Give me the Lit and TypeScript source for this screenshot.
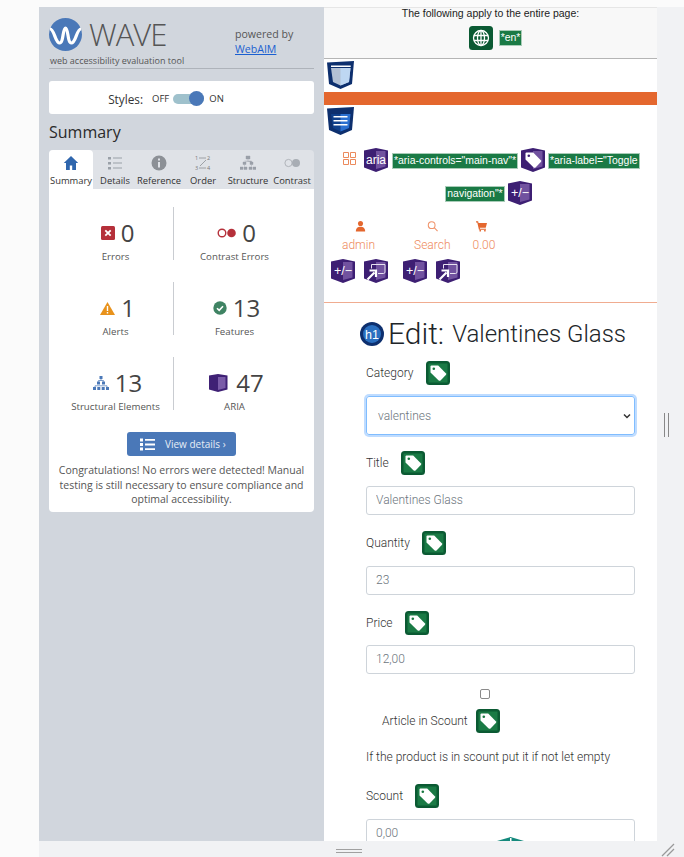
import { LitElement, css, html, svg } from "lit";
import { customElement } from "lit/decorators.js";

const tagGlyph = svg`<path d="M5.500 4.500h6.700l7.600 7.800a1.300 1.300 0 0 1 0 1.800l-5.300 5.300a1.300 1.300 0 0 1-1.800 0L4.500 11.500v-6a1 1 0 0 1 1-1z" fill="#fff" />`;

const greenTag = () => html`<svg class="icon" viewBox="0 0 24 24">
  <rect width="24" height="24" rx="3.500" fill="#0b5a33" />
  <rect x="2.500" y="2.500" width="19" height="19" fill="#1a7a45" />
  ${tagGlyph}
  <circle cx="7.800" cy="7.800" r="1.300" fill="#17773f" />
</svg>`;

const purple = (inner: unknown) => html`<svg class="icon" viewBox="0 0 24 24">
  <path d="M0 2.500 12 0l12 2.500v17L12 24 0 19.500z" fill="#3d1f73" />
  <path d="M12 3h9.500v15.500L12 21z" fill="#71529f" />
  ${inner}
</svg>`;

const plusMinus = () =>
  purple(svg`<text x="12" y="16" font-family="Liberation Sans, sans-serif" font-size="12.500" fill="#fff" text-anchor="middle">+/−</text>`);

const popup = () =>
  purple(svg`<path d="M7.500 9.500v-4h13.500v7.500a1.500 1.500 0 0 1-1.500 1.500H14" fill="none" stroke="#e8e2f0" />
    <path d="M3.500 20.500 10.500 13.500M5.500 11.500h6.500v6.500" fill="none" stroke="#fff" stroke-width="2.200" />`);

const shield = (fill: string, side: string, inner: unknown) => html`<svg class="shield" viewBox="0 0 27 28">
  <path d="M0 1.500 27 0l-2 23-11.500 5L2 23z" fill="#0d2f6e" />
  <path d="M4 7h19.500L22 21l-8.500 3.500L6 21z" fill="${fill}" />
  <path d="M13.500 7h10L22 21l-8.500 3.500z" fill="${side}" />
  ${inner}
</svg>`;

const field = (label: string, value: string, tight = false) => html`
  <div class="label-row ${tight ? "tight" : ""}"><span>${label}</span>${greenTag()}</div>
  <input class="input" .value=${value} />
`;

@customElement("app-root")
export class AppRoot extends LitElement {
  static styles = css`
    :host {
      display: block;
      width: 684px;
      height: 857px;
      overflow: hidden;
      background: #fbfbfb;
    }

    .frame {
      display: flex;
      flex-direction: column;
      height: 850px;
      padding-top: 7px;
    }

    .main {
      display: flex;
      height: 834px;
      margin-left: 39px;
    }

    .sidebar {
      flex: none;
      box-sizing: border-box;
      width: 285px;
      padding: 11px 10px 0;
      background: #d1d6dd;
      color: #444;
      font-family: "Open Sans", sans-serif;
    }

    .brand {
      display: flex;
      height: 50px;
      border-bottom: 1px solid #aeb3ba;
    }

    .logo-block {
      width: 186px;
    }

    .logo {
      display: flex;
      align-items: center;
      gap: 7px;
      height: 33px;
    }

    .logo svg {
      width: 33px;
      height: 33px;
    }

    .wave {
      color: #555;
      font-size: 31px;
      font-weight: 300;
      line-height: 33px;
      letter-spacing: -1px;
    }

    .tagline {
      margin: 3px 0 0 1px;
      color: #555;
      font-size: 9px;
      line-height: 13px;
      white-space: nowrap;
    }

    .powered {
      padding-top: 9px;
      color: #555;
      font-size: 10.6px;
      line-height: 14.5px;
    }

    .powered a {
      display: block;
      color: #1a5fd0;
      text-decoration: underline;
    }

    .styles-card {
      display: flex;
      align-items: center;
      justify-content: center;
      gap: 9px;
      box-sizing: border-box;
      height: 33px;
      margin-top: 12px;
      padding: 2px 31px 0 0;
      border-radius: 3px;
      background: #fff;
      color: #333;
      font-size: 11.8px;
    }

    .styles-card small {
      font-size: 9.5px;
    }

    .switch {
      position: relative;
      width: 31px;
      height: 10px;
      margin: 0 -4px 0 -5px;
      border-radius: 5px;
      background: #9fc1cc;
    }

    .switch::after {
      content: "";
      position: absolute;
      top: -3px;
      right: 0;
      width: 15px;
      height: 15px;
      border-radius: 50%;
      background: #4a78b8;
    }

    h2 {
      margin: 7px 0 6px;
      color: #2a2a2a;
      font-size: 16px;
      font-weight: 400;
      line-height: 23px;
    }

    .tabs {
      display: flex;
      height: 39px;
      border-radius: 4px 4px 0 0;
      background: #dfe2e7;
    }

    .tab {
      display: flex;
      flex-direction: column;
      align-items: center;
      box-sizing: border-box;
      width: 44px;
      padding-top: 5px;
      color: #333;
      font-size: 9.4px;
      line-height: 13px;
      white-space: nowrap;
    }

    .tab svg {
      width: 16px;
      height: 16px;
      margin-bottom: 3px;
    }

    .tab.active {
      border-radius: 4px 4px 0 0;
      background: #fff;
    }

    .panel {
      height: 323px;
      padding-top: 18px;
      box-sizing: border-box;
      border-radius: 0 0 4px 4px;
      background: #fff;
      text-align: center;
    }

    .stats {
      display: grid;
      grid-template-columns: 124px 141px;
      grid-auto-rows: 53px;
      row-gap: 22px;
    }

    .stat {
      display: flex;
      flex-direction: column;
      align-items: center;
      box-sizing: border-box;
      padding: 13px 0 0 9px;
      color: #555;
      font-size: 9.7px;
      line-height: 13px;
      white-space: nowrap;
    }

    .stat:nth-child(even) {
      padding: 13px 19px 0 0;
      border-left: 1px solid #c9ccd1;
    }

    .stat b {
      display: flex;
      align-items: center;
      gap: 6px;
      height: 26px;
      margin: 0 0 4px 4px;
      color: #444;
      font-size: 24px;
      font-weight: 400;
      line-height: 26px;
    }

    .details {
      display: inline-flex;
      align-items: center;
      gap: 10px;
      box-sizing: border-box;
      width: 109px;
      height: 24px;
      margin-top: 22px;
      padding-left: 13px;
      border-radius: 3px;
      background: #4a78b8;
      color: #e6edf6;
      font-size: 10px;
    }

    .details svg {
      width: 15px;
      height: 13px;
    }

    .note {
      margin: 7px 5px 0;
      color: #555;
      font-size: 10.5px;
      line-height: 14.5px;
    }

    .page {
      position: relative;
      flex: none;
      width: 333px;
      overflow: hidden;
      background: #fff;
      color: #333;
      font-family: Roboto, sans-serif;
      font-size: 12px;
      font-weight: 300;
    }

    .notice {
      box-sizing: border-box;
      height: 52px;
      border-top: 1px solid #e6e6e6;
      border-bottom: 1px solid #b5b5b5;
      background: #f8f8f8;
      color: #222;
      font-family: "Liberation Sans", sans-serif;
      font-size: 10.5px;
      font-weight: 400;
      line-height: 11px;
      text-align: center;
    }

    .notice-icons {
      display: flex;
      align-items: center;
      justify-content: center;
      gap: 7px;
      margin-top: 7px;
      padding-left: 9px;
    }

    .attr {
      padding: 1px;
      outline: 1px solid #a9ccb8;
      background: #1a7a45;
      color: #fff;
      font-family: "Liberation Sans", sans-serif;
      font-size: 10.45px;
      font-weight: 400;
      line-height: 12px;
      white-space: nowrap;
    }

    .icon {
      flex: none;
      width: 24px;
      height: 24px;
    }

    .shield {
      display: block;
      width: 27px;
      height: 28px;
      margin-left: 3px;
    }

    .first {
      margin-top: 2px;
    }

    .bar {
      height: 13px;
      margin: 3px 0 2px;
      background: #e4672e;
    }

    .aria-row {
      display: flex;
      align-items: center;
      gap: 4px;
      height: 24px;
      margin-top: 13px;
      padding-left: 19px;
    }

    .aria-row .attr {
      margin-top: 1px;
    }

    .aria-row .grid-icon + svg + .attr {
      margin-left: 1px;
    }

    .aria-row.second {
      justify-content: center;
      margin-top: 9px;
      padding: 0 3px 0 0;
    }

    .grid-icon {
      width: 13px;
      height: 13px;
      margin: -4px 4px 0 0;
    }

    .nav {
      display: flex;
      height: 34px;
      margin-top: 14px;
      padding-left: 18px;
      color: #ee8a5c;
      line-height: 16px;
    }

    .nav div {
      display: flex;
      flex-direction: column;
      align-items: center;
      gap: 5px;
    }

    .nav div:nth-child(2) {
      margin-left: 39px;
    }

    .nav div:nth-child(3) {
      margin-left: 22px;
    }

    .nav svg {
      width: 11px;
      height: 12px;
      margin-top: 1px;
    }

    .nav div:nth-child(1) svg {
      margin-left: 3px;
    }

    .nav div:nth-child(3) svg {
      margin-right: 4px;
    }

    .nav-icons {
      display: flex;
      gap: 9px;
      margin: 6px 0 0 7px;
    }

    .nav-icons svg:nth-child(3) {
      margin-left: 6px;
    }

    hr {
      height: 1px;
      margin: 19px 0 0;
      border: 0;
      background: #f0ac90;
    }

    .form {
      padding: 19px 22px 0 42px;
    }

    h1 {
      display: flex;
      align-items: center;
      gap: 4px;
      height: 24px;
      margin: 0 0 15px -6px;
      color: #212529;
      font-size: 30px;
      font-weight: 300;
      line-height: 24px;
      white-space: nowrap;
    }

    h1 small {
      margin-left: 4px;
      font-size: 24px;
      font-weight: 300;
    }

    .label-row {
      display: flex;
      align-items: center;
      gap: 12px;
      height: 24px;
      margin-bottom: 11px;
    }

    .label-row span {
      margin-top: -1px;
    }

    .label-row.tight {
      margin-bottom: 10px;
    }

    .select,
    .input {
      box-sizing: border-box;
      width: 269px;
      margin-bottom: 16px;
      color: #6c757d;
      font-family: Roboto, sans-serif;
      font-size: 12px;
      font-weight: 300;
    }

    .input {
      display: block;
      height: 29px;
      padding: 0 9px 1px;
      border: 1px solid #ced4da;
      border-radius: 3px;
      outline: none;
    }

    .select {
      display: flex;
      align-items: center;
      justify-content: space-between;
      height: 39px;
      padding: 0 3px 0 11px;
      border: 1px solid #80bdff;
      border-radius: 3px;
      box-shadow: 0 0 0 2px #bfdcff;
    }

    .select svg {
      width: 8px;
      height: 6px;
    }

    .check {
      display: block;
      box-sizing: border-box;
      width: 10px;
      height: 10px;
      margin: -1px 0 10px 114px;
      border: 1px solid #8a8a8a;
      border-radius: 2px;
      background: #fff;
    }

    .article {
      display: flex;
      align-items: center;
      gap: 8px;
      height: 24px;
      margin: 0 0 17px 16px;
    }

    .article span {
      margin-top: -1px;
    }

    .hint {
      height: 15px;
      margin-bottom: 19px;
      line-height: 15px;
      white-space: nowrap;
    }

    .floating {
      position: absolute;
      top: 830px;
      left: 173px;
      width: 27px;
      height: 8px;
    }

    .gutter {
      position: relative;
      flex: none;
      width: 27px;
      background: #f1f2f4;
    }

    .gutter::after {
      content: "";
      position: absolute;
      top: 406px;
      left: 7px;
      width: 3px;
      height: 24px;
      border: solid #888;
      border-width: 0 1px;
    }

    .footer {
      position: relative;
      height: 16px;
      margin-left: 39px;
      background: #f1f2f4;
    }

    .footer::before {
      content: "";
      position: absolute;
      top: 8px;
      left: 297px;
      width: 26px;
      height: 2px;
      border: solid #a0a0a0;
      border-width: 1px 0;
    }

    .footer svg {
      position: absolute;
      top: 2px;
      right: 9px;
      width: 14px;
      height: 14px;
    }
  `;

  render() {
    return html`
      <div class="frame">
        <div class="main">
          <aside class="sidebar">
            <div class="brand">
              <div class="logo-block">
                <div class="logo">
                  <svg viewBox="0 0 33 33">
                    <circle cx="16.500" cy="16.500" r="16.500" fill="#4a78b8" />
                    <path d="M1 11c4.500 0 5 14 9.700 14 3.800 0 3-15 5.800-15s2 15 5.800 15c4.700 0 5.200-14 9.700-14" fill="none" stroke="#fff" stroke-width="3.200" />
                  </svg>
                  <span class="wave">WAVE</span>
                </div>
                <div class="tagline">web accessibility evaluation tool</div>
              </div>
              <div class="powered">powered by<a>WebAIM</a></div>
            </div>

            <div class="styles-card">
              <span>Styles:</span><small>OFF</small>
              <span class="switch"></span><small>ON</small>
            </div>

            <h2>Summary</h2>

            <div class="tabs">
              <div class="tab active">
                <svg viewBox="0 0 16 16"><path d="M8 1 .8 8h2.200v7h3.800v-4.500h2.400V15H13V8h2.200z" fill="#2f66ad" /></svg>
                Summary
              </div>
              <div class="tab">
                <svg viewBox="0 0 16 16"><path d="M1 2h3v2.500H1zM1 7h3v2.500H1zM1 12h3v2.500H1zM6 2.500h9v1H6zM6 7.500h9v1H6zM6 12.500h9v1H6z" fill="#9aa0a8" /></svg>
                Details
              </div>
              <div class="tab">
                <svg viewBox="0 0 16 16"><circle cx="8" cy="8" r="7.500" fill="#8c9096" /><path d="M7 3.500h2v2H7zM7 7h2v5.500H7z" fill="#dfe2e7" /></svg>
                Reference
              </div>
              <div class="tab">
                <svg viewBox="0 0 16 16">
                  <text x="0" y="5" font-size="5.500" fill="#777">1</text><text x="12" y="5" font-size="5.500" fill="#777">2</text>
                  <text x="0" y="15" font-size="5.500" fill="#777">3</text><text x="12" y="15" font-size="5.500" fill="#777">4</text>
                  <path d="M4 3h7M11 5l-6 6M4 13h7" fill="none" stroke="#8c9096" stroke-width=".8" />
                </svg>
                Order
              </div>
              <div class="tab" style="margin-left:1px">
                <svg viewBox="0 0 16 16"><path d="M6 1h4v3H6zM3 7h3v2.500H3zM10 7h3v2.500h-3zM0 12h3v2.500H0zM4 12h3v2.500H4zM9 12h3v2.500H9zM13 12h3v2.500h-3zM8 4v2M4.500 6h7v1M4.500 9.500v2M11.500 9.500v2" fill="#9aa0a8" stroke="#9aa0a8" stroke-width=".4" /></svg>
                Structure
              </div>
              <div class="tab">
                <svg viewBox="0 0 16 16"><circle cx="4.500" cy="8" r="3.600" fill="none" stroke="#b0b4ba" /><circle cx="12" cy="8" r="4" fill="#a8adb4" /></svg>
                Contrast
              </div>
            </div>

            <div class="panel">
              <div class="stats">
                <div class="stat">
                  <b><svg width="14" height="14" viewBox="0 0 14 14"><rect width="14" height="14" rx="1.500" fill="#b5303a" /><path d="m4.300 4.300 5.400 5.400m0-5.400L4.300 9.700" stroke="#fff" stroke-width="1.800" /></svg>0</b>
                  Errors
                </div>
                <div class="stat">
                  <b><svg width="19" height="10" viewBox="0 0 19 10"><circle cx="5" cy="5" r="3.800" fill="none" stroke="#b5303a" stroke-width="1.400" /><circle cx="14.500" cy="5" r="4.300" fill="#b5303a" /></svg>0</b>
                  Contrast Errors
                </div>
                <div class="stat">
                  <b><svg width="15" height="13" viewBox="0 0 15 13"><path d="M7.500 0 15 13H0z" fill="#e8921c" /><path d="M6.800 4h1.400v5H6.800zM6.800 10h1.400v1.500H6.800z" fill="#fff" /></svg>1</b>
                  Alerts
                </div>
                <div class="stat">
                  <b><svg width="14" height="14" viewBox="0 0 14 14"><circle cx="7" cy="7" r="6.700" fill="#3f8363" /><path d="m4 7.200 2.200 2.200L10 5.300" fill="none" stroke="#fff" stroke-width="1.600" /></svg>13</b>
                  Features
                </div>
                <div class="stat">
                  <b><svg width="16" height="14" viewBox="0 0 16 14"><path d="M6.500 0h3v3h-3zM4 5.500h3v3H4zM9 5.500h3v3H9zM0 11h3v3H0zM4.300 11h3v3h-3zM8.700 11h3v3h-3zM13 11h3v3h-3z" fill="#4a78b8" /><path d="M8 3v1.500M5.500 5.500v-1h5v1M2 11v-1.200h12V11" fill="none" stroke="#4a78b8" stroke-width=".7" /></svg>13</b>
                  Structural Elements
                </div>
                <div class="stat">
                  <b><svg width="19" height="18" viewBox="0 0 19 18" style="margin-right:2px"><path d="M0 1.500 9 0l9.500 1.500v14L9 18 0 15.500z" fill="#3f2175" /><path d="M9 3h7.500v11L9 16z" fill="#7a5ca8" /></svg>47</b>
                  ARIA
                </div>
              </div>

              <div class="details">
                <svg viewBox="0 0 15 13"><path d="M0 .5h3v3H0zM0 5h3v3H0zM0 9.500h3v3H0zM5 1h10v1.800H5zM5 5.600h10v1.800H5zM5 10.200h10V12H5z" fill="#fff" /></svg>
                View details ›
              </div>
              <div class="note">Congratulations! No errors were detected! Manual testing is still necessary to ensure compliance and optimal accessibility.</div>
            </div>
          </aside>

          <section class="page">
            <div class="notice">
              The following apply to the entire page:
              <div class="notice-icons">
                <svg class="icon" viewBox="0 0 24 24">
                  <rect width="24" height="24" rx="3.500" fill="#0b5a33" />
                  <g fill="none" stroke="#fff" stroke-width="1.300">
                    <circle cx="12" cy="12" r="7.500" />
                    <ellipse cx="12" cy="12" rx="3.500" ry="7.500" />
                    <path d="M12 4.500v15M5 9.500h14M5 14.500h14" />
                  </g>
                </svg>
                <span class="attr">*en*</span>
              </div>
            </div>

            <div class="first">${shield("#b3c0d4", "#bed7f2", svg`<path d="M4 4.500h19.700v1.500H4z" fill="#fff" />`)}</div>
            <div class="bar"></div>
            ${shield("#0f3f8a", "#2a6fd0", svg`<path d="M6.500 9h14v1.600h-14zM6.500 13h14v1.600h-14zM6.500 17h14v1.600h-14z" fill="#fff" />`)}

            <div class="aria-row">
              <svg class="grid-icon" viewBox="0 0 13 13"><path d="M.5.500h5v5h-5zM7.500.500h5v5h-5zM.5 7.500h5v5h-5zM7.500 7.500h5v5h-5z" fill="none" stroke="#ec8a5c" /></svg>
              ${purple(svg`<text x="12" y="16" font-family="Liberation Sans, sans-serif" font-size="12" fill="#fff" text-anchor="middle">aria</text>`)}
              <span class="attr">*aria-controls="main-nav"*</span>
              ${purple(svg`${tagGlyph}<circle cx="7.800" cy="7.800" r="1.300" fill="#3d1f73" />`)}
              <span class="attr">*aria-label="Toggle</span>
            </div>
            <div class="aria-row second">
              <span class="attr">navigation"*</span>
              ${plusMinus()}
            </div>

            <div class="nav">
              <div>
                <svg viewBox="0 0 13 13"><circle cx="6.500" cy="3.500" r="3" fill="#e4672e" /><path d="M1 13c0-4 2.500-5.500 5.500-5.500S12 9 12 13z" fill="#e4672e" /></svg>
                admin
              </div>
              <div>
                <svg viewBox="0 0 13 13"><circle cx="5.500" cy="5.500" r="4" fill="none" stroke="#f0936a" stroke-width="1.200" /><path d="m8.500 8.500 4 4" stroke="#f0936a" stroke-width="1.300" /></svg>
                Search
              </div>
              <div>
                <svg viewBox="0 0 13 13"><path d="M0 1h2.500l.5 2h10l-1.500 5.500H4.500l.3 1.200h7v1.300H3.500L1.500 2.300H0z" fill="#e4672e" /><circle cx="5" cy="12" r="1" fill="#e4672e" /><circle cx="10.500" cy="12" r="1" fill="#e4672e" /></svg>
                0.00
              </div>
            </div>

            <div class="nav-icons">${plusMinus()}${popup()}${plusMinus()}${popup()}</div>
            <hr />

            <div class="form">
              <h1>
                <svg class="icon" viewBox="0 0 24 24">
                  <circle cx="12" cy="12" r="12" fill="#0d2f6e" />
                  <circle cx="12" cy="12" r="9" fill="#2a6fc0" />
                  <text x="12" y="16.500" font-family="Liberation Sans, sans-serif" font-size="12.500" fill="#fff" text-anchor="middle">h1</text>
                </svg>
                <span>Edit:</span> <small>Valentines Glass</small>
              </h1>

              <div class="label-row"><span>Category</span>${greenTag()}</div>
              <div class="select">
                <span>valentines</span>
                <svg viewBox="0 0 8 6"><path d="m1 1.500 3 3 3-3" fill="none" stroke="#333" stroke-width="1.500" /></svg>
              </div>

              ${field("Title", "Valentines Glass")}
              ${field("Quantity", "23")}
              ${field("Price", "12,00", true)}

              <span class="check"></span>
              <div class="article"><span>Article in Scount</span>${greenTag()}</div>
              <div class="hint">If the product is in scount put it if not let empty</div>
              ${field("Scount", "0,00")}
            </div>

            <svg class="floating" viewBox="0 0 27 8"><path d="M0 4 13.500 0 27 4v4H0z" fill="#14897c" /><path d="M13 1h1.500v7H13z" fill="#fff" /></svg>
          </section>
          <div class="gutter"></div>
        </div>
        <div class="footer">
          <svg viewBox="0 0 14 14"><path d="M1 13 13 1M6 13l7-7" stroke="#999" stroke-width="1.300" /></svg>
        </div>
      </div>
    `;
  }
}
